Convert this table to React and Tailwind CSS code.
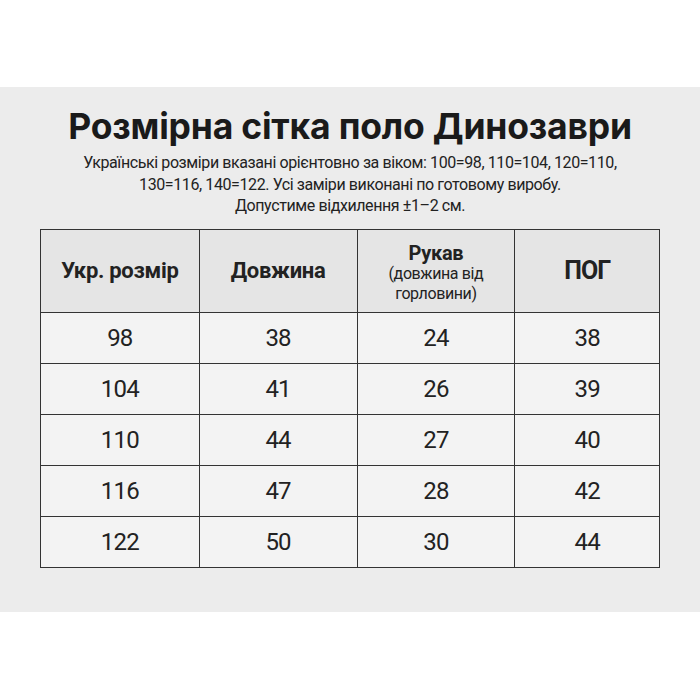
export default function App() {
  const rows = [
    ["98", "38", "24", "38"],
    ["104", "41", "26", "39"],
    ["110", "44", "27", "40"],
    ["116", "47", "28", "42"],
    ["122", "50", "30", "44"],
  ];
  const narrow = { fontFamily: 'Roboto, sans-serif' };
  return (
    <div className="w-[700px] h-[700px] bg-white flex flex-col">
      <div className="h-[87px]" />
      <div className="h-[525px] bg-[#ececec] flex flex-col items-center pt-[17px]">
        <h1 className="text-[35.5px] font-bold text-[#1a1a1a] leading-[46px] tracking-[-0.2px]" style={{ fontFamily: 'Inter, sans-serif' }}>
          Розмірна сітка поло Динозаври
        </h1>
        <p className="text-[16px] leading-[21.5px] tracking-[-0.4px] text-[#222] text-center mt-[2px]" style={narrow}>
          Українські розміри вказані орієнтовно за віком: 100=98, 110=104, 120=110,<br />
          130=116, 140=122. Усі заміри виконані по готовому виробу.<br />
          Допустиме відхилення ±1–2 см.
        </p>
        <table className="mt-[12px] w-[620px] border-collapse border-[1.5px] border-[#333] text-[#222]" style={narrow}>
          <colgroup>
            <col className="w-[159px]" />
            <col className="w-[158px]" />
            <col className="w-[158px]" />
            <col className="w-[145px]" />
          </colgroup>
          <thead>
            <tr className="h-[83px] bg-[#e5e5e5]">
              <th className="border-[1.5px] border-[#333] text-[22px] font-bold tracking-[-0.3px]">Укр. розмір</th>
              <th className="border-[1.5px] border-[#333] text-[22px] font-bold tracking-[-0.3px]">Довжина</th>
              <th className="border-[1.5px] border-[#333] font-normal pt-[5px]">
                <div className="text-[20px] font-bold leading-[22px] tracking-[-0.3px]">Рукав</div>
                <div className="text-[16px] leading-[20px] tracking-[-0.4px]">(довжина від</div>
                <div className="text-[16px] leading-[20px] tracking-[-0.4px]">горловини)</div>
              </th>
              <th className="border-[1.5px] border-[#333] text-[25px] font-bold tracking-[-1px]">ПОГ</th>
            </tr>
          </thead>
          <tbody>
            {rows.map((r, i) => (
              <tr key={i} className="h-[51px] bg-[#f3f3f3]">
                {r.map((c, j) => (
                  <td key={j} className="border-[1.5px] border-[#333] text-center text-[24px] tracking-[-0.8px]">{c}</td>
                ))}
              </tr>
            ))}
          </tbody>
        </table>
      </div>
    </div>
  );
}
